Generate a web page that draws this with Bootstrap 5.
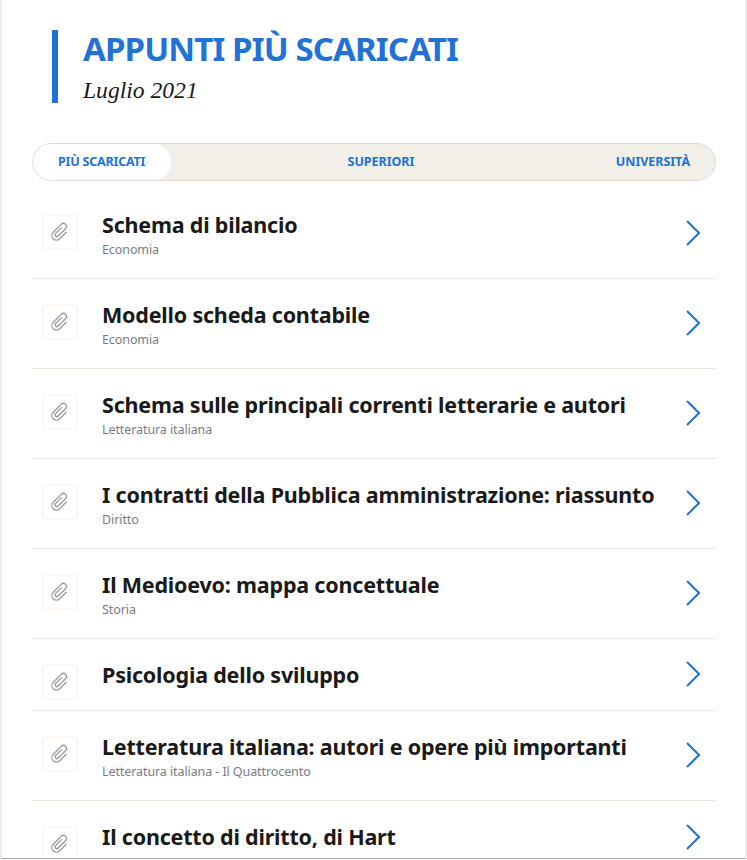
<!DOCTYPE html>
<html lang="it">
<head>
<meta charset="utf-8">
<title>Appunti più scaricati</title>
<link rel="stylesheet" href="https://cdn.jsdelivr.net/npm/bootstrap@5.3.0/dist/css/bootstrap.min.css">
<style>
html,body{height:860px;overflow:hidden;background:#fff}
body{font-family:"Noto Sans","Liberation Sans",sans-serif;color:#1a1a1a}
.shell{height:859px;overflow:hidden;border-left:2px solid #f1eee9;border-right:2px solid #f1eee9;border-bottom:1px solid #aaa;padding:30px 29px 0 30px}
.head-block{margin-left:20px;border-left:6px solid #2272d6;padding-left:25px;height:73px}
.head-title{font-size:33px;line-height:38px;font-weight:700;color:#2272d6;margin:0;letter-spacing:-.87px;text-transform:uppercase}
.head-sub{font-family:"Liberation Serif",serif;font-style:italic;font-size:23.6px;line-height:30px;margin:7px 0 0}
.pill-tabs{margin-top:40px;height:38px;background:#f2efe9;border:1px solid #e0dcd5;border-radius:19px}
.pill-tab{font-size:12.5px;font-weight:700;color:#2272d6;text-decoration:none;text-transform:uppercase;letter-spacing:-.04px;line-height:36px;padding:0 25px}
.pill-tab.on{background:#fff;border-radius:18px;width:138px;padding:0 0 0 25px;letter-spacing:-.2px}
.list-top{margin-top:8px}
.row-item{border-bottom:1px solid #e9e6e0;padding:0 16px 0 10px;color:inherit;text-decoration:none}
.row-sub{height:90px}
.row-solo{height:72px}
.row-last{height:90px}
.clip-box{width:36px;height:36px;border:2px solid #f9f6f3;border-radius:3px;flex:none;margin:25px 24px 0 0}
.text-col{padding-top:22px}
.row-title{font-size:21.5px;line-height:28px;font-weight:700;margin:0;letter-spacing:-.2px;white-space:nowrap}
.row-cat{font-size:12.5px;line-height:16px;color:#7b7b85;margin:3px 0 0;letter-spacing:-.09px}
.chev{flex:none;width:14px;height:26px;align-self:center;margin-top:-2px}
.row-solo .chev{margin-top:-1px}
.row-last .chev{margin-top:-17px}
</style>
</head>
<body>
<div class="shell">
  <div class="head-block">
    <h1 class="head-title">Appunti più scaricati</h1>
    <p class="head-sub">Luglio 2021</p>
  </div>
  <nav class="pill-tabs d-flex justify-content-between align-items-center">
    <a class="pill-tab on" href="#">Più scaricati</a>
    <a class="pill-tab" href="#">Superiori</a>
    <a class="pill-tab" href="#">Università</a>
  </nav>
  <div class="list-top d-flex flex-column">
    <a class="row-item row-sub d-flex align-items-start" href="#">
      <span class="clip-box d-flex align-items-center justify-content-center"><svg width="20" height="20" viewBox="0 0 24 24" fill="none" stroke="#999" stroke-width="1.5" stroke-linecap="round"><path transform="rotate(45 12 12)" d="M9.500 7v10a2.200 2.200 0 0 0 4.400 0V4.500a3.700 3.700 0 0 0-7.400 0V18a5.500 5.500 0 0 0 11 0V7"/></svg></span>
      <span class="text-col flex-grow-1"><span class="row-title d-block">Schema di bilancio</span><span class="row-cat d-block">Economia</span></span>
      <svg class="chev" viewBox="0 0 14 26" fill="none" stroke="#2272d6" stroke-width="2"><path d="M1 1 13 13 1 25"/></svg>
    </a>
    <a class="row-item row-sub d-flex align-items-start" href="#">
      <span class="clip-box d-flex align-items-center justify-content-center"><svg width="20" height="20" viewBox="0 0 24 24" fill="none" stroke="#999" stroke-width="1.5" stroke-linecap="round"><path transform="rotate(45 12 12)" d="M9.500 7v10a2.200 2.200 0 0 0 4.400 0V4.500a3.700 3.700 0 0 0-7.400 0V18a5.500 5.500 0 0 0 11 0V7"/></svg></span>
      <span class="text-col flex-grow-1"><span class="row-title d-block">Modello scheda contabile</span><span class="row-cat d-block">Economia</span></span>
      <svg class="chev" viewBox="0 0 14 26" fill="none" stroke="#2272d6" stroke-width="2"><path d="M1 1 13 13 1 25"/></svg>
    </a>
    <a class="row-item row-sub d-flex align-items-start" href="#">
      <span class="clip-box d-flex align-items-center justify-content-center"><svg width="20" height="20" viewBox="0 0 24 24" fill="none" stroke="#999" stroke-width="1.5" stroke-linecap="round"><path transform="rotate(45 12 12)" d="M9.500 7v10a2.200 2.200 0 0 0 4.400 0V4.500a3.700 3.700 0 0 0-7.400 0V18a5.500 5.500 0 0 0 11 0V7"/></svg></span>
      <span class="text-col flex-grow-1"><span class="row-title d-block">Schema sulle principali correnti letterarie e autori</span><span class="row-cat d-block">Letteratura italiana</span></span>
      <svg class="chev" viewBox="0 0 14 26" fill="none" stroke="#2272d6" stroke-width="2"><path d="M1 1 13 13 1 25"/></svg>
    </a>
    <a class="row-item row-sub d-flex align-items-start" href="#">
      <span class="clip-box d-flex align-items-center justify-content-center"><svg width="20" height="20" viewBox="0 0 24 24" fill="none" stroke="#999" stroke-width="1.5" stroke-linecap="round"><path transform="rotate(45 12 12)" d="M9.500 7v10a2.200 2.200 0 0 0 4.400 0V4.500a3.700 3.700 0 0 0-7.400 0V18a5.500 5.500 0 0 0 11 0V7"/></svg></span>
      <span class="text-col flex-grow-1"><span class="row-title d-block">I contratti della Pubblica amministrazione: riassunto</span><span class="row-cat d-block">Diritto</span></span>
      <svg class="chev" viewBox="0 0 14 26" fill="none" stroke="#2272d6" stroke-width="2"><path d="M1 1 13 13 1 25"/></svg>
    </a>
    <a class="row-item row-sub d-flex align-items-start" href="#">
      <span class="clip-box d-flex align-items-center justify-content-center"><svg width="20" height="20" viewBox="0 0 24 24" fill="none" stroke="#999" stroke-width="1.5" stroke-linecap="round"><path transform="rotate(45 12 12)" d="M9.500 7v10a2.200 2.200 0 0 0 4.400 0V4.500a3.700 3.700 0 0 0-7.400 0V18a5.500 5.500 0 0 0 11 0V7"/></svg></span>
      <span class="text-col flex-grow-1"><span class="row-title d-block">Il Medioevo: mappa concettuale</span><span class="row-cat d-block">Storia</span></span>
      <svg class="chev" viewBox="0 0 14 26" fill="none" stroke="#2272d6" stroke-width="2"><path d="M1 1 13 13 1 25"/></svg>
    </a>
    <a class="row-item row-solo d-flex align-items-start" href="#">
      <span class="clip-box d-flex align-items-center justify-content-center"><svg width="20" height="20" viewBox="0 0 24 24" fill="none" stroke="#999" stroke-width="1.5" stroke-linecap="round"><path transform="rotate(45 12 12)" d="M9.500 7v10a2.200 2.200 0 0 0 4.400 0V4.500a3.700 3.700 0 0 0-7.400 0V18a5.500 5.500 0 0 0 11 0V7"/></svg></span>
      <span class="text-col flex-grow-1"><span class="row-title d-block">Psicologia dello sviluppo</span></span>
      <svg class="chev" viewBox="0 0 14 26" fill="none" stroke="#2272d6" stroke-width="2"><path d="M1 1 13 13 1 25"/></svg>
    </a>
    <a class="row-item row-sub d-flex align-items-start" href="#">
      <span class="clip-box d-flex align-items-center justify-content-center"><svg width="20" height="20" viewBox="0 0 24 24" fill="none" stroke="#999" stroke-width="1.5" stroke-linecap="round"><path transform="rotate(45 12 12)" d="M9.500 7v10a2.200 2.200 0 0 0 4.400 0V4.500a3.700 3.700 0 0 0-7.400 0V18a5.500 5.500 0 0 0 11 0V7"/></svg></span>
      <span class="text-col flex-grow-1"><span class="row-title d-block">Letteratura italiana: autori e opere più importanti</span><span class="row-cat d-block">Letteratura italiana - Il Quattrocento</span></span>
      <svg class="chev" viewBox="0 0 14 26" fill="none" stroke="#2272d6" stroke-width="2"><path d="M1 1 13 13 1 25"/></svg>
    </a>
    <a class="row-item row-last d-flex align-items-start" href="#">
      <span class="clip-box d-flex align-items-center justify-content-center"><svg width="20" height="20" viewBox="0 0 24 24" fill="none" stroke="#999" stroke-width="1.5" stroke-linecap="round"><path transform="rotate(45 12 12)" d="M9.500 7v10a2.200 2.200 0 0 0 4.400 0V4.500a3.700 3.700 0 0 0-7.400 0V18a5.500 5.500 0 0 0 11 0V7"/></svg></span>
      <span class="text-col flex-grow-1"><span class="row-title d-block">Il concetto di diritto, di Hart</span></span>
      <svg class="chev" viewBox="0 0 14 26" fill="none" stroke="#2272d6" stroke-width="2"><path d="M1 1 13 13 1 25"/></svg>
    </a>
  </div>
</div>
<script src="https://cdn.jsdelivr.net/npm/bootstrap@5.3.0/dist/js/bootstrap.bundle.min.js"></script>
</body>
</html>
